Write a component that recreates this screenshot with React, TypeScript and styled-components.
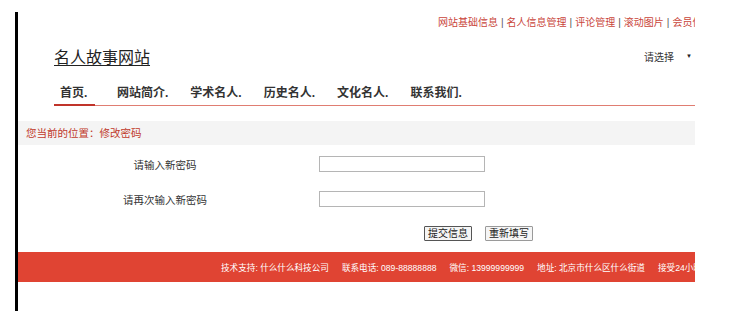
import styled, { createGlobalStyle } from "styled-components";

const GlobalStyle = createGlobalStyle`
    html, body {
        margin: 0;
        padding: 0;
        background: #ffffff;
    }
    body {
        font-family: "Liberation Sans", "Noto Sans CJK SC", sans-serif;
        color: #333333;
    }
`;

const topLinks = ["网站基础信息", "名人信息管理", "评论管理", "滚动图片", "会员信息管理"];
const navItems = ["首页.", "网站简介.", "学术名人.", "历史名人.", "文化名人.", "联系我们."];
const footerItems = [
    "技术支持: 什么什么科技公司",
    "联系电话: 089-88888888",
    "微信: 13999999999",
    "地址: 北京市什么区什么街道",
    "接受24小时服务热线",
];

function App() {
    return (
        <>
            <GlobalStyle />
            <Frame>
                <TopLinks>
                    {topLinks.map((link, i) => (
                        <span key={link}>
                            {i > 0 && <Sep>|</Sep>}
                            <TopLink>{link}</TopLink>
                        </span>
                    ))}
                </TopLinks>
                <Header>
                    <Logo>名人故事网站</Logo>
                    <Picker>
                        请选择
                        <Caret>▼</Caret>
                    </Picker>
                </Header>
                <Nav>
                    {navItems.map((item, i) => (
                        <NavItem key={item} $active={i === 0}>{item}</NavItem>
                    ))}
                </Nav>
                <Crumb>您当前的位置：修改密码</Crumb>
                <Form>
                    <Row>
                        <Label>请输入新密码</Label>
                        <Input type="password" />
                    </Row>
                    <Row>
                        <Label>请再次输入新密码</Label>
                        <Input type="password" />
                    </Row>
                    <Buttons>
                        <Button $primary>提交信息</Button>
                        <Button>重新填写</Button>
                    </Buttons>
                </Form>
                <Footer>
                    {footerItems.map((item) => (
                        <span key={item}>{item}</span>
                    ))}
                </Footer>
            </Frame>
        </>
    );
};

const Frame = styled.div`
    margin: 12px 0 0 15px;
    width: 677px;
    height: 299px;
    border-left: 3px solid #000000;
    overflow: hidden;
    display: flex;
    flex-direction: column;
`;

const TopLinks = styled.div`
    padding: 4px 0 0 420px;
    height: 14px;
    white-space: nowrap;
    font-size: 10px;
    line-height: 14px;
`;

const TopLink = styled.span`
    color: #c9453a;
`;

const Sep = styled.span`
    color: #555555;
    margin: 0 3px;
`;

const Header = styled.div`
    display: flex;
    justify-content: space-between;
    align-items: center;
    padding: 14px 0 0 36px;
    height: 24px;
`;

const Logo = styled.a`
    font-size: 16px;
    color: #222222;
    text-decoration: underline;
    text-underline-offset: 2px;
    text-decoration-thickness: 1px;
`;

const Picker = styled.div`
    display: flex;
    align-items: center;
    font-size: 10px;
    color: #333333;
    padding-right: 3px;
`;

const Caret = styled.span`
    font-size: 6px;
    margin-left: 12px;
    color: #222222;
`;

const Nav = styled.div`
    display: flex;
    gap: 22px;
    margin: 16px 0 0 36px;
    height: 22px;
    border-bottom: 1px solid #e07d72;
    box-sizing: border-box;
`;

const NavItem = styled.div<{ $active?: boolean }>`
    font-size: 12px;
    font-weight: bold;
    color: #333333;
    line-height: 18px;
    padding-left: ${(p) => (p.$active ? "6px" : "0")};
    min-width: ${(p) => (p.$active ? "41px" : "0")};
    box-sizing: border-box;
    border-bottom: ${(p) => (p.$active ? "2px solid #c0342a" : "none")};
    height: ${(p) => (p.$active ? "22px" : "auto")};
`;

const Crumb = styled.div`
    margin-top: 15px;
    height: 24px;
    line-height: 24px;
    background: #f4f4f4;
    padding-left: 8px;
    font-size: 10.5px;
    color: #c0392b;
`;

const Form = styled.div`
    display: flex;
    flex-direction: column;
    padding-top: 11px;
`;

const Row = styled.div`
    display: grid;
    grid-template-columns: 294px 1fr;
    column-gap: 7px;
    align-items: center;
    height: 16px;
    margin-bottom: 19px;
`;

const Label = styled.div`
    text-align: center;
    font-size: 10.5px;
    color: #333333;
`;

const Input = styled.input`
    width: 166px;
    height: 16px;
    box-sizing: border-box;
    border: 1px solid #b5b5b5;
    padding: 0;
    margin: 0;
`;

const Buttons = styled.div`
    display: flex;
    gap: 13px;
    padding-left: 406px;
`;

const Button = styled.button<{ $primary?: boolean }>`
    font-family: "Liberation Sans", "Noto Sans CJK SC", sans-serif;
    font-size: 10px;
    height: 15px;
    line-height: 13px;
    padding: 0 3px;
    background: #f5f5f5;
    color: #222222;
    border: 1px solid ${(p) => (p.$primary ? "#555555" : "#9a9a9a")};
    border-radius: 1px;
`;

const Footer = styled.div`
    margin-top: 11px;
    height: 30px;
    background: #e04433;
    display: flex;
    align-items: center;
    gap: 13px;
    padding-left: 203px;
    white-space: nowrap;
    font-size: 8.6px;
    color: #ffffff;
`;

export default App;
